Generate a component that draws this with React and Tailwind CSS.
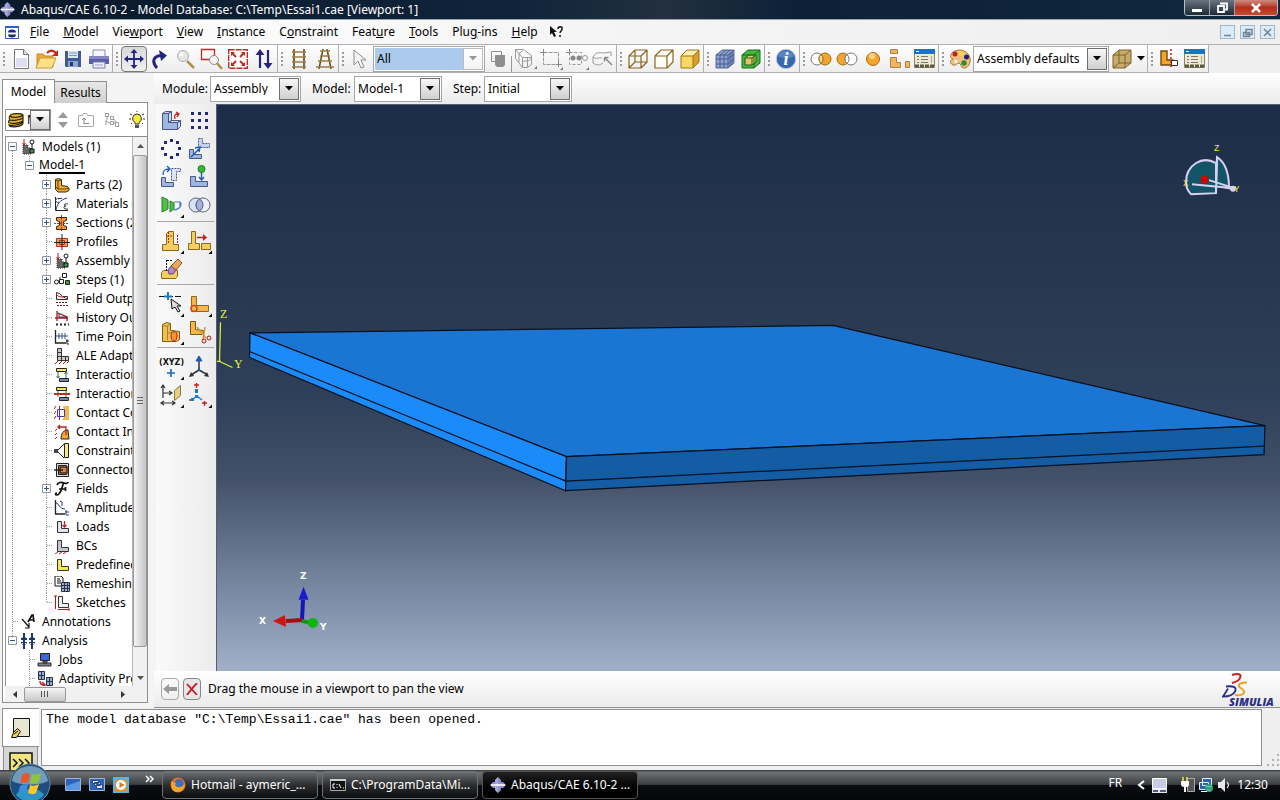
import React from "react";

const NAVY = "#26257c";

function Svg({ w = 20, h = 20, box, children, className = "" }) {
  return (
    <svg width={w} height={h} viewBox={box || `0 0 ${w} ${h}`} fill="none" className={"shrink-0 " + className} aria-hidden="true">
      {children}
    </svg>
  );
}

/* ---------- shared shapes ---------- */

function Logo({ s = 16 }) {
  return (
    <Svg w={s} h={s} box="0 0 16 16">
      <path d="M8 0l3 3v2h2l3 3-3 3h-2v2l-3 3-3-3v-2H3L0 8l3-3h2V3z" fill="#8f90cf" />
      <path d="M5 3l3-3v16l-3-3z" fill="#b9badf" opacity=".6" />
      <path d="M1 8h14" stroke="#fff" strokeWidth="1.6" />
    </Svg>
  );
}

function Grip() {
  return (
    <Svg w={8} h={20}>
      <path d="M4 3v14" stroke="#9a9a9a" strokeWidth="2" strokeDasharray="2 2" />
    </Svg>
  );
}

function Arrow({ color = "#000" }) {
  return (
    <Svg w={8} h={5}>
      <path d="M0 0h8L4 4.5z" fill={color} />
    </Svg>
  );
}

function Corner() {
  return <path d="M27 23.500v3.500h-3.500z" fill="#000" />;
}

/* ---------- toolbar icons ---------- */

const TB = {
  New: (
    <Svg>
      <path d="M3.500 .5h9l5 5v14h-14z" fill="#fff" stroke="#777" />
      <path d="M5 9h11v9H5z" fill="#dedff0" />
      <path d="M12.500 .5v5h5" fill="#ddd" stroke="#777" />
    </Svg>
  ),
  Open: (
    <Svg w={24}>
      <path d="M2 5h6l2 2h8v11H2z" fill="#eaa93a" stroke="#c78a1d" />
      <path d="M5 9h16l-4 10H1z" fill="#fde186" stroke="#cf9a2c" />
      <path d="M12 4c3-3 6-3 9 0" stroke="#c8221a" strokeWidth="2.200" />
      <path d="M23 1v6h-6z" fill="#c8221a" />
    </Svg>
  ),
  Save: (
    <Svg>
      <path d="M2 2h16v16H3l-1-1z" fill="#3c5a96" />
      <path d="M5 2h10v7H5z" fill="#dfe6f2" />
      <path d="M6 4h8M6 6.500h8" stroke="#7f93bb" />
      <path d="M5 12h10v6H5z" fill="#8fa4ca" />
      <path d="M7 13h3v4H7z" fill="#24396b" />
    </Svg>
  ),
  Print: (
    <Svg w={22}>
      <path d="M5 1h12v7H5z" fill="#f6f6fb" stroke="#8b8bb0" />
      <path d="M1 7h20v8H1z" fill="#5a5ca9" />
      <path d="M1 7h20v3H1z" fill="#8485c5" />
      <path d="M5 13h12v6H5z" fill="#eef0fb" stroke="#777aa8" />
      <path d="M7 16h8" stroke="#9a9cc4" />
    </Svg>
  ),
  Pan: (
    <Svg w={20} h={20}>
      <path d="M10 3v14M3 10h14" stroke={NAVY} strokeWidth="1.800" />
      <path d="M10 0l3.500 4h-7zM10 20l3.500-4h-7zM0 10l4-3.500v7zM20 10l-4-3.500v7z" fill={NAVY} />
    </Svg>
  ),
  Rotate: (
    <Svg w={18} h={20}>
      <path d="M6 19C0 12 3 7 10 6.500" stroke={NAVY} strokeWidth="3" />
      <path d="M8 1l8 5.500L10 12z" fill={NAVY} />
    </Svg>
  ),
  Zoom: (
    <Svg>
      <path d="M11 12l7 7" stroke="#b0914a" strokeWidth="2.500" />
      <circle cx="7" cy="7" r="5.500" fill="#e4e6e4" stroke="#aeb0ae" />
      <circle cx="5.500" cy="5.500" r="2" fill="#fff" />
    </Svg>
  ),
  ZoomBox: (
    <Svg w={24} h={22}>
      <path d="M1.500 1.500h13v10h-13z" stroke="#c02a22" strokeWidth="1.300" />
      <path d="M16 14l6 7" stroke="#b0914a" strokeWidth="2.500" />
      <circle cx="14" cy="12" r="4.500" fill="#f4f5f4" stroke="#8a8c8a" />
    </Svg>
  ),
  Fit: (
    <Svg>
      <path d="M.7 .7h18.600v18.600H.7z" fill="#fff" stroke="#c02a22" strokeWidth="1.400" strokeDasharray="6 1" />
      <path d="M4 4l4 4M16 4l-4 4M4 16l4-4M16 16l-4-4" stroke="#c02a22" strokeWidth="2" />
      <path d="M3 3h4L3 7zM17 3h-4l4 4zM3 17h4l-4-4zM17 17h-4l4-4z" fill="#c02a22" />
    </Svg>
  ),
  Cycle: (
    <Svg w={18} h={20}>
      <path d="M5 19V5M13 1v14" stroke={NAVY} strokeWidth="2.200" />
      <path d="M5 0l4.500 6h-9zM13 20l4.500-6h-9z" fill={NAVY} />
    </Svg>
  ),
  Rails: (
    <Svg w={16}>
      <path d="M3 0v20M13 0v20" stroke="#5f4514" strokeWidth="1.600" />
      <path d="M1 3h14M1 8h14M1 13h14M1 18h14" stroke="#9c7d42" strokeWidth="1.600" />
    </Svg>
  ),
  Perspective: (
    <Svg w={18}>
      <path d="M7 0L3 20M11 0l4 20" stroke="#5f4514" strokeWidth="1.500" />
      <path d="M4 2h10M4 7h10M2 12h14M0 18h18" stroke="#9c7d42" strokeWidth="1.600" />
    </Svg>
  ),
  Select: (
    <Svg w={14}>
      <path d="M1 1v15l4-4 3 7 3-1-3-7h5z" stroke="#8e8e8e" fill="#f4f4f4" />
    </Svg>
  ),
  Overlap: (
    <Svg w={16} h={18}>
      <path d="M1.500 1.500h10v10h-10z" stroke="#8e8e8e" />
      <path d="M5 5h10v10l-2 2H7l-2-2z" fill="#8e8e8e" />
    </Svg>
  ),
  GCube: (
    <Svg w={24} h={22}>
      <path d="M2.500 1.500h8l8 6v9l-4 3h-5l-7-9zM2.500 1.500l7 8h9M9.500 9.500v10M6 5.500l4-3M6 5.500v9M9.500 13h6l3-3M14.500 9.500v10" stroke="#999" />
      <path d="M24 18v3h-3z" fill="#777" />
    </Svg>
  ),
  GRect: (
    <Svg w={24} h={22}>
      <path d="M4.500 4.500h15v12h-15z" stroke="#999" strokeDasharray="4 1" />
      <path d="M1 4.500h6M4.500 1v6M17 16.500h6M19.500 13v6" stroke="#888" />
      <path d="M24 19v3h-3z" fill="#777" />
    </Svg>
  ),
  GLink: (
    <Svg w={24} h={22}>
      <path d="M4.500 4.500h12v12h-12z" stroke="#999" strokeDasharray="3 2" />
      <path d="M1 4.500h6M4.500 1v6" stroke="#888" />
      <circle cx="8" cy="10" r="2.500" fill="#888" />
      <circle cx="14" cy="10" r="2.500" fill="#888" />
      <circle cx="20" cy="10" r="2.500" stroke="#999" />
      <path d="M24 19v3h-3z" fill="#777" />
    </Svg>
  ),
  GShape: (
    <Svg w={24} h={20}>
      <path d="M2 8c3-6 8-4 11-4l7-1v4M2 8c3 3 6 0 9 1M2 8v6c4 3 7 2 10 0" stroke="#999" />
      <path d="M14 9l7 7M13.500 8.500v4M13.500 8.500h4" stroke="#888" strokeWidth="1.500" />
    </Svg>
  ),
  Wire: (
    <Svg>
      <path d="M1 7h12v12H1zM7 1h12v12H7zM1 7l6-6M13 7l6-6M1 19l6-6M13 19l6-6" stroke="#8a6420" strokeWidth="1.200" />
    </Svg>
  ),
  Hidden: (
    <Svg>
      <path d="M1 7h12v12H1zM1 7l6-6h12v12l-6 6M13 7l6-6" stroke="#8a6420" strokeWidth="1.200" fill="#fffdf4" />
    </Svg>
  ),
  Shaded: (
    <Svg>
      <path d="M1 7h12v12H1z" fill="#f8d860" />
      <path d="M1 7l6-6h12l-6 6z" fill="#fdeeb0" />
      <path d="M13 7l6-6v12l-6 6z" fill="#d99f28" />
      <path d="M1 7h12v12H1zM1 7l6-6h12v12l-6 6M13 7l6-6" stroke="#a17316" />
    </Svg>
  ),
  Mesh: (
    <Svg>
      <path d="M1 6l6-5h12v13l-6 5H1z" fill="#8fa3cf" />
      <path d="M1 6h12v13H1zM1 6l6-5h12v13l-6 5M13 6l6-5M5 6v13M9 6v13M1 10h12l6-5M1 15h12l6-5M5 6l6-5M9 6l6-5M15 4v13M17 3v13" stroke="#3b4c86" strokeWidth=".8" />
    </Svg>
  ),
  GreenCube: (
    <Svg>
      <path d="M1 6l6-5h12v13l-6 5H1z" fill="#43b83c" />
      <path d="M4 9l4-3h7v7l-4 3H4z" fill="#e6c568" stroke="#1e5a1b" />
      <path d="M1 6h12v13H1zM1 6l6-5h12v13l-6 5M13 6l6-5M4 9h7v7M11 9l4-3" stroke="#1e6a1b" />
    </Svg>
  ),
  Info: (
    <Svg w={22} h={22}>
      <circle cx="11" cy="11" r="9.700" fill="#3767ad" stroke="#b7cbe6" />
      <path d="M3 8c3-7 13-7 16 0-4 3-11 3-16 0z" fill="#7fa3d6" opacity=".5" />
      <text x="11" y="17" textAnchor="middle" fontFamily="Liberation Serif, serif" fontStyle="italic" fontWeight="700" fontSize="18" fill="#fff">i</text>
    </Svg>
  ),
  BoolR: (
    <Svg w={22}>
      <circle cx="7" cy="10" r="6" fill="#fff" stroke="#777" />
      <circle cx="15" cy="10" r="6" fill="#f4a52c" stroke="#a56a10" />
      <path d="M11 5.500a6 6 0 010 9 6 6 0 010-9z" fill="#fbdc9c" stroke="#8a6420" />
    </Svg>
  ),
  BoolL: (
    <Svg w={22}>
      <circle cx="7" cy="10" r="6" fill="#f4a52c" stroke="#a56a10" />
      <circle cx="15" cy="10" r="6" fill="#fff" stroke="#777" />
      <path d="M11 5.500a6 6 0 000 9 6 6 0 000-9z" fill="#fff" stroke="#777" />
    </Svg>
  ),
  Ball: (
    <Svg w={16}>
      <circle cx="8" cy="10" r="6.500" fill="#f4a52c" stroke="#a56a10" />
      <circle cx="7" cy="7" r="3" fill="#fcd488" />
    </Svg>
  ),
  Blocks: (
    <Svg w={22}>
      <path d="M2.500 .5h7v4h-7zM2.500 8.500h6v5h4v5h-10zM17.500 12.500h4v6h-4z" fill="#efb45c" stroke="#a8824a" />
    </Svg>
  ),
  Manager: (
    <Svg w={22}>
      <path d="M.5 .5h20v18H.5z" fill="#efe8cc" stroke="#8a8468" />
      <path d="M0 0h21v5H0z" fill="#1b73c8" />
      <path d="M2 2.500h3" stroke="#fff" />
      <path d="M3 7.500h2M7 7.500h7M3 10.500h2M7 10.500h7M3 13.500h2M7 13.500h7" stroke="#777" />
      <path d="M17.500 7v7" stroke="#aaa" />
      <path d="M1 17h19" stroke="#5d5840" strokeWidth="3" strokeDasharray="4 1" />
    </Svg>
  ),
  Palette: (
    <Svg w={22}>
      <path d="M6 2c6-3 14 1 15 7 1 5-2 11-7 10-3-1-1-4-4-5-2 0-3 3-6 2-4-2-3-5 0-6C0 9 1 4 6 2z" fill="#f0bf7e" stroke="#a8763a" />
      <circle cx="6" cy="5" r="2.500" fill="#c62020" />
      <circle cx="12" cy="4.500" r="2.300" fill="#f1e23a" />
      <circle cx="17.500" cy="8" r="2.500" fill="#1f1e78" />
      <circle cx="15" cy="14" r="2.700" fill="#2f8a35" />
      <circle cx="7" cy="12.500" r="1.700" fill="#fff" />
    </Svg>
  ),
  TanCube: (
    <Svg>
      <path d="M1 6l6-5h12v13l-6 5H1z" fill="#c8ab6c" />
      <path d="M1 6h12v13H1zM1 6l6-5h12v13l-6 5M13 6l6-5M7 1v13h12M7 14l-6 5" stroke="#7c6228" />
    </Svg>
  ),
  Cut: (
    <Svg>
      <path d="M2 2h6v9h6v5H2z" fill="#f4a52c" stroke="#6d4a14" strokeWidth="1.400" />
      <path d="M12.500 11.500h6v5h-6z" fill="#fff" stroke="#333" />
      <path d="M12 0v20" stroke="#c01818" strokeWidth="1.500" strokeDasharray="2 2" />
    </Svg>
  ),
};

function Tool({ icon, label, active, disabled }) {
  return (
    <button
      type="button"
      aria-label={label}
      disabled={disabled}
      className={
        "flex h-[26px] w-[26px] shrink-0 items-center justify-center " +
        (active ? "rounded border border-[#777] bg-linear-to-b from-[#d9d9d9] to-[#efefef]" : "")
      }
    >
      {TB[icon]}
    </button>
  );
}

function Group({ children }) {
  return (
    <div className="flex h-full shrink-0 items-center border-r border-b border-[#b0b0b0] bg-linear-to-b from-white to-[#ededed]">
      <Grip />
      {children}
    </div>
  );
}

function Combo({ label, value, width, disabled, id }) {
  return (
    <div className={"relative flex h-[26px] shrink-0 border border-[#a5a5a5] bg-white p-px " + width}>
      <select
        id={id}
        aria-label={label}
        disabled={disabled}
        defaultValue={value}
        className={"h-full w-full appearance-none pl-[2px] pr-6 text-[12px] leading-none text-black outline-none opacity-100 " + (disabled ? "bg-[#accbec]" : "bg-white")}
      >
        <option>{value}</option>
      </select>
      <span
        className={
          "pointer-events-none absolute top-px right-px bottom-px flex w-[20px] items-center justify-center border bg-linear-to-b " +
          (disabled ? "border-[#bbb] from-white to-[#f3f3f3]" : "border-[#6e6e6e] from-[#f7f7f7] to-[#cfcfcf]")
        }
      >
        <Arrow color={disabled ? "#999" : "#000"} />
      </span>
    </div>
  );
}

/* ---------- model tree ---------- */

const L = (fill, extra, stroke = "#333") => (
  <>
    <path d="M3.500 2.500h4v7h7v4h-11z" fill={fill} stroke={stroke} />
    {extra}
  </>
);

const TREE_ICONS = {
  models: (
    <>
      <path d="M3 6v9h8V9H8V6z" fill="#666" stroke="#333" strokeDasharray="1 1" />
      <path d="M4 0v6M2.500 4L4 6l1.500-2" stroke="#b01818" />
      <circle cx="12" cy="3" r="2" stroke="#111" />
      <path d="M12 5v5" stroke="#111" />
      <path d="M10 10h4v4h-4z" fill="#3d9a45" stroke="#111" />
    </>
  ),
  parts: (
    <>
      <path d="M1.500 2.500l3-1 3 1v6l6 1 1.500 2v2l-3 1.500H4l-2.500-2.500z" fill="#f0ac33" stroke="#3b2808" />
      <path d="M2 3l2 1v8l-2-2M4 4l3-1M4 12h8l3-1" stroke="#3b2808" strokeWidth=".8" />
    </>
  ),
  materials: (
    <>
      <path d="M1.500 1v13.500H14" stroke="#222" />
      <path d="M2 14C3 8 6 4 13 2M4 2.500h4M5 3a2 2 0 100 3" stroke="#2b3f78" />
      <path d="M14 8c-4-1-5 2-2 2-3 0-3 4 2 3" stroke="#222" />
    </>
  ),
  sections: (
    <>
      <path d="M2.500 2.500h10v3l-3 1v4l3 1v3h-10v-3l3-1v-4l-3-1z" fill="#f0953a" stroke="#3b2808" />
      <path d="M7.500 0v16M0 8.500h15" stroke="#b83020" strokeDasharray="2 1" />
    </>
  ),
  profiles: (
    <>
      <path d="M2.500 4.500h11v8h-11zM5.500 6.500h5v4h-5z" stroke="#b83020" fill="#f0a070" />
      <path d="M8 0v16M0 8.500h16" stroke="#222" />
    </>
  ),
  steps: (
    <>
      <path d="M4 9h6M6 9V5" stroke="#222" />
      <circle cx="2.500" cy="10" r="2" fill="#fff" stroke="#222" />
      <path d="M5.500 7.500h4v4h-4zM8.500 1.500h4v4h-4z" fill="#fff" stroke="#222" />
      <path d="M11.500 8.500h4v4h-4z" fill="#3d9a45" stroke="#222" />
    </>
  ),
  field: (
    <>
      <path d="M2.500 1.500v7h11v-3h-5l-3-3z" fill="#eee" stroke="#333" />
      <path d="M2 3c4 5 6 1 11 5" stroke="#c02020" />
      <path d="M2 11.500h12M3 14.500h12" stroke="#701818" strokeDasharray="2 1" />
    </>
  ),
  history: (
    <>
      <path d="M3 1v10M1 8h13M4 3l9 4v4" stroke="#a01828" strokeWidth="1.300" />
      <path d="M5 3v4h7" stroke="#333" />
      <path d="M2 14.500h13" stroke="#222" strokeWidth="2" strokeDasharray="2 2" />
    </>
  ),
  time: (
    <>
      <path d="M1.500 1v13H12" stroke="#222" strokeWidth="1.300" />
      <path d="M2 7h12M5 4v6M8 4v6M11 4v6" stroke="#35528c" />
      <path d="M13 10v5h2M12 12h3" stroke="#222" />
    </>
  ),
  ale: (
    <>
      <path d="M3.500 .5h4v8h7v4h-11zM3.500 4.500h4M3.500 8.500h4v4M11.500 8.500v4" fill="#c8c8c8" stroke="#333" />
      <path d="M1 16l3-3M5 16l3-3M9 16l3-3M13 15l2-2" stroke="#b01818" />
    </>
  ),
  interaction: (
    <>
      <path d="M2.500 1.500h10v3h-10z" fill="#f3e85a" stroke="#222" />
      <path d="M5.500 11.500h9v3h-9z" fill="#7384b5" stroke="#222" />
      <path d="M4 5v6M12 5v6M2.500 9L4 11l1.500-2M10.500 7L12 5l1.500 2" stroke="#23803a" />
    </>
  ),
  interaction2: (
    <>
      <path d="M2.500 1.500h10v3h-10z" fill="#f3e85a" stroke="#222" />
      <path d="M5.500 11.500h9v3h-9z" fill="#7384b5" stroke="#222" />
      <path d="M4 5v6M12 5v6" stroke="#23803a" />
      <path d="M0 8h16" stroke="#b83020" strokeWidth="2" />
    </>
  ),
  contact: (
    <>
      <path d="M8 1h7v14H8c4-4 4-10 0-14z" fill="#f1b84b" />
      <path d="M3.500 4.500h7v7h-7zM5.500 1v14" stroke="#4a35a8" />
      <path d="M0 4l2-3M0 9l2-3M0 14l2-3" stroke="#b01818" />
    </>
  ),
  contactInit: (
    <>
      <path d="M14 6c-5 0-7 4-7 9h8z" fill="#f1a83b" stroke="#222" />
      <path d="M4 3h8v8M6 1L4 3l2 2" stroke="#c02020" strokeWidth="1.300" />
      <path d="M1 7l2-2M1 11l2-2M1 15l2-2" stroke="#b01818" />
    </>
  ),
  constraint: (
    <>
      <path d="M10.500 .5h4v14h-4z" fill="#f6ec7a" stroke="#222" />
      <path d="M10 1L3 8l7 7" stroke="#222" />
      <path d="M0 6h4v4H0z" fill="#444" />
    </>
  ),
  connector: (
    <>
      <path d="M2.500 1.500h12v13h-12zM4.500 3.500h8v9h-8z" stroke="#222" fill="#ddd" />
      <path d="M6 5h7v6H6z" fill="#c98a58" stroke="#50200a" strokeWidth="1.500" />
      <path d="M0 8h9" stroke="#222" strokeWidth="1.500" />
    </>
  ),
  fields: (
    <path d="M3 4c1-3 5-3 7-2s4 0 4-1M9.500 2C8 6 7 14 3 14c-2 0-2-2 0-2M5 8h7M11.500 6v4" stroke="#111" strokeWidth="1.700" />
  ),
  amplitude: (
    <>
      <path d="M1.500 0v14H11" stroke="#222" strokeWidth="1.300" />
      <path d="M2 3c3 0 3 6 9 6M6 1l2 1v4M12 10v5h3M11 12h4" stroke="#2b3f78" />
    </>
  ),
  loads: L("#dfe3ec", <path d="M10.500 2v6M8.500 6l2 2 2-2" stroke="#c02020" strokeWidth="1.300" />),
  bcs: L("#c2c6d4", <path d="M1 16l3-2M5 16l3-2M9 16l3-2" stroke="#c02020" />),
  predefined: L("#f3e85a", null),
  remeshing: (
    <>
      <path d="M1 0h6l2 2v8H1z" fill="#fff" stroke="#111" />
      <path d="M3 3h3M3 5h4M3 7h4" stroke="#111" />
      <path d="M7.500 6.500h8v9h-8zM7.500 9.500h8M7.500 12.500h8M10.500 6.500v9M13.500 6.500v9" fill="#9bb0cc" stroke="#26324a" />
    </>
  ),
  sketches: (
    <>
      <path d="M4.500 1.500h4v7h6v4h-10z" fill="#eee" stroke="#333" />
      <path d="M1.500 1v13M4 14.500h11M0 1h3M15 13v3" stroke="#b01818" />
    </>
  ),
  annotations: (
    <>
      <path d="M2 5l7 8M9 9v5H5" stroke="#111" strokeWidth="1.200" />
      <path d="M8 8l4-7h1l1 7M9 6h5" stroke="#111" strokeWidth="1.700" />
    </>
  ),
  analysis: (
    <>
      <path d="M4 0v16M12 0v16" stroke="#1c3a63" strokeWidth="2" />
      <path d="M1 6l3-3 3 3zM1 10l3 3 3-3zM9 6l3-3 3 3zM9 10l3 3 3-3zM1 5h6v2H1zM9 5h6v2H9zM1 9h6v2H1zM9 9h6v2H9z" fill="#1c3a63" />
    </>
  ),
  jobs: (
    <>
      <path d="M3.500 1.500h9v7h-9z" fill="#3a66e0" stroke="#222" />
      <path d="M6 9h4v2H6zM1 11h13v3H1z" fill="#7d8088" stroke="#333" />
    </>
  ),
  adaptivity: (
    <>
      <path d="M1.500 .5h6v8h-6zM1.500 4.500h6M4.500 .5v8M9.500 6.500h6v8h-6zM9.500 10.500h6M12.500 6.500v8" fill="#9bb0cc" stroke="#26324a" />
      <path d="M3 10c0 3 1 4 4 4M5 11l3 3-3 2" stroke="#c02020" strokeWidth="1.500" />
    </>
  ),
};

/* guide cells from the left: "|" line, "-" line with branch, "L" last branch, "+" closed expander, "M" last open expander, "T" first open expander, " " blank */
const ROWS = [
  ["T", "models", "Models (1)"],
  ["|M", null, "Model-1"],
  ["| +", "parts", "Parts (2)"],
  ["| +", "materials", "Materials (1)"],
  ["| +", "sections", "Sections (2)"],
  ["| -", "profiles", "Profiles"],
  ["| +", "models", "Assembly"],
  ["| +", "steps", "Steps (1)"],
  ["| -", "field", "Field Output Requests"],
  ["| -", "history", "History Output Requests"],
  ["| -", "time", "Time Points"],
  ["| -", "ale", "ALE Adaptive Mesh"],
  ["| -", "interaction", "Interactions"],
  ["| -", "interaction2", "Interaction Properties"],
  ["| -", "contact", "Contact Controls"],
  ["| -", "contactInit", "Contact Initializations"],
  ["| -", "constraint", "Constraints"],
  ["| -", "connector", "Connector Sections"],
  ["| +", "fields", "Fields"],
  ["| -", "amplitude", "Amplitudes"],
  ["| -", "loads", "Loads"],
  ["| -", "bcs", "BCs"],
  ["| -", "predefined", "Predefined Fields"],
  ["| -", "remeshing", "Remeshing Rules"],
  ["| L", "sketches", "Sketches"],
  ["-", "annotations", "Annotations"],
  ["M", "analysis", "Analysis"],
  [" -", "jobs", "Jobs"],
  [" -", "adaptivity", "Adaptivity Processes"],
];

function Guide({ kind, last }) {
  const box = "+TM".includes(kind);
  const up = "|-L+M".includes(kind);
  const down = "|-+T".includes(kind);
  return (
    <Svg w={last ? 14 : 17} h={19}>
      {up && <path d="M6.500 0v9" stroke="#999" strokeDasharray="1 1" />}
      {down && <path d="M6.500 10v9" stroke="#999" strokeDasharray="1 1" />}
      {"-L".includes(kind) && <path d="M7 9.500h6" stroke="#999" strokeDasharray="1 1" />}
      {box && (
        <>
          <path d="M2.500 5.500h8v8h-8z" fill="#fff" stroke="#8f96a3" />
          <path d={kind === "+" ? "M4 9.500h5M6.500 7v5" : "M4 9.500h5"} stroke="#34508f" />
        </>
      )}
    </Svg>
  );
}

function Tree() {
  return (
    <ul className="min-w-0 flex-1 overflow-hidden" role="tree">
      {ROWS.map(([g, icon, text]) => (
        <li key={text} role="treeitem" className="flex h-[19px] items-center whitespace-nowrap">
          {g.split("").map((k, i) => (
            <Guide key={i} kind={k} last={i === g.length - 1} />
          ))}
          {icon && (
            <Svg w={16} h={16} className="mr-[6px]">
              {TREE_ICONS[icon]}
            </Svg>
          )}
          {icon ? <span>{text}</span> : <span className="ml-[2px] border-b-2 border-black leading-[15px]">{text}</span>}
        </li>
      ))}
    </ul>
  );
}

function ModelPanel() {
  return (
    <aside className="flex min-h-0 w-[148px] shrink-0 flex-col bg-[#f4f4f4] pt-[6px] pb-[5px] pl-[2px]">
      <div className="flex h-6 shrink-0 items-end" role="tablist">
        <button type="button" role="tab" aria-selected="true" className="h-6 w-[53px] border border-b-0 border-[#8f8f8f] bg-white">
          Model
        </button>
        <button type="button" role="tab" aria-selected="false" className="h-[22px] w-[52px] border border-b-0 border-l-0 border-[#8f8f8f] bg-linear-to-b from-[#e8e8e8] to-[#cfcfcf]">
          Results
        </button>
        <span className="flex-1 border-b border-[#8f8f8f]" />
      </div>
      <div className="flex min-h-0 flex-1 flex-col border border-t-0 border-[#8f8f8f] bg-white pl-[2px]">
        <div className="flex h-[33px] shrink-0 items-center">
          <button type="button" aria-label="Database" className="flex h-[22px] w-[46px] items-center border border-[#8f8f8f]">
            <Svg w={18} h={16} className="ml-px">
              <path d="M3 4c0-3 13-3 13-1v8c0 4-13 5-14 2 0-1 1-1 1-2-2 0-2-2 0-3-1-1-1-3 0-4z" fill="#e3ba2c" />
              <path d="M3 4c2 2 10 2 13-1M3 4c0-3 13-3 13-1v8c0 4-13 5-14 2 3 1 11 0 14-3M3 4c-1 1-1 3 0 4 3 1 10 0 13-2M3 8c-2 1-2 3 0 3 3 1 10 0 13-2" stroke="#2b2204" strokeWidth="1.200" />
            </Svg>
            <span className="w-[5px] overflow-hidden pl-[2px] text-left">M</span>
            <span className="ml-auto flex h-full w-5 items-center justify-center border border-[#6e6e6e] bg-linear-to-b from-white to-[#cfcfcf]">
              <Arrow />
            </span>
          </button>
          <button type="button" aria-label="Reorder" className="flex w-6 justify-center">
            <Svg w={10} h={16}>
              <path d="M5 0l5 6H0zM5 16l5-6H0z" fill="#999" />
            </Svg>
          </button>
          <button type="button" aria-label="Up one level" className="flex w-[22px] justify-center">
            <Svg w={16} h={14}>
              <path d="M.5 2.500h4l1-2h3l1 2h6v11H.5z" stroke="#aaa" />
              <path d="M6 11V5M4 7l2-2 2 2M6 10.500h5" stroke="#888" />
            </Svg>
          </button>
          <button type="button" aria-label="Link" className="flex w-[30px] justify-center">
            <Svg w={16} h={16}>
              <path d="M1.500 1.500h3v3h-3zM6.500 4.500h3v3h-3zM6.500 9.500h3v3h-3zM11.500 10.500h3v4h-3zM2 9l4 2M3 5v3M9 6l3 4M9 11h3M2 8v5" stroke="#999" />
            </Svg>
          </button>
          <button type="button" aria-label="Tips" className="flex w-[20px] justify-center">
            <Svg w={16} h={18}>
              <path d="M1 3l2 1M15 3l-2 1M0 8h2M14 8h2M8 0v1M2 13l1-1M14 13l-1-1" stroke="#333" />
              <path d="M8 3a4.500 4.500 0 00-2 8.500V13h4v-1.500A4.500 4.500 0 008 3z" fill="#f9ea3c" stroke="#333" />
              <path d="M6 14h4v3H6z" fill="#555" />
            </Svg>
          </button>
        </div>
        <div className="flex min-h-0 flex-1 border-t border-l border-[#8f8f8f]">
          <div className="flex min-w-0 flex-1 overflow-hidden">
            <Tree />
          </div>
          <div className="flex w-[15px] shrink-0 flex-col items-center border-l border-[#b5b5b5] bg-[#f1f1f1]">
            <span className="flex h-[18px] items-center">
              <Svg w={7} h={4}>
                <path d="M0 4h7L3.500 0z" fill="#555" />
              </Svg>
            </span>
            <span className="flex w-full flex-1 items-center justify-center rounded-xs border border-[#999] bg-linear-to-r from-[#f5f5f5] to-[#c4c4c9]">
              <Svg w={6} h={8}>
                <path d="M0 .5h6M0 3.500h6M0 6.500h6" stroke="#666" />
              </Svg>
            </span>
            <span className="flex h-[39px] items-end pb-[6px]">
              <Svg w={7} h={4}>
                <path d="M0 0h7L3.500 4z" fill="#555" />
              </Svg>
            </span>
          </div>
        </div>
        <div className="flex h-4 shrink-0 items-center bg-[#f1f1f1]">
          <span className="flex w-[19px] justify-center">
            <Svg w={4} h={7}>
              <path d="M4 0v7L0 3.500z" fill="#333" />
            </Svg>
          </span>
          <span className="flex h-[15px] w-[42px] items-center justify-center rounded-xs border border-[#999] bg-linear-to-b from-[#f5f5f5] to-[#c8c8c8]">
            <Svg w={8} h={6}>
              <path d="M.5 0v6M3.500 0v6M6.500 0v6" stroke="#555" />
            </Svg>
          </span>
          <Svg w={4} h={7} className="ml-[55px]">
            <path d="M0 0v7l4-3.500z" fill="#333" />
          </Svg>
        </div>
      </div>
    </aside>
  );
}

/* ---------- toolbox ---------- */

const BLUE = "#9db7e2";
const GOLD = "#f3cf63";

const KIT = [
  [
    ["Instance part", <><path d="M5.500 6.500h6v9h9v7h-15z" fill={BLUE} stroke="#48587e" /><path d="M5.500 6.500l3-2h6l-3 2zM11.500 15.500l3-2h9l-3 2zM11.500 6.500l3-2v9l-3 2zM20.500 15.500l3-2v6l-3 3z" stroke="#48587e" fill="#d0dcf2" /><path d="M18 12c-1-4 0-5 3-5M19 5l3 2-2 3" stroke="#c02020" strokeWidth="1.300" /></>],
    ["Linear pattern", <path d="M6 5h3v3H6zM13 5h3v3h-3zM20 5h3v3h-3zM6 12h3v3H6zM13 12h3v3h-3zM20 12h3v3h-3zM6 19h3v3H6zM13 19h3v3h-3zM20 19h3v3h-3z" fill={NAVY} />],
    ["Radial pattern", <path d="M13 4h3v3h-3zM13 21h3v3h-3zM4 12h3v3H4zM21 12h3v3h-3zM7 6h3v3H7zM19 6h3v3h-3zM7 18h3v3H7zM19 18h3v3h-3z" fill={NAVY} />],
    ["Translate instance", <><path d="M13.500 3.500h4v5h7v4h-11z" fill="#c3d2ee" stroke="#48587e" strokeDasharray="2 1" /><path d="M4.500 14.500h4v5h8v4h-12z" fill={BLUE} stroke="#48587e" /><path d="M6 22l8-8M10 13l5-1-1 5" stroke="#1c5bb8" strokeWidth="1.500" /></>],
    ["Rotate instance", <><path d="M14.500 5.500h9v3h-4v9h-5z" fill="#dbe4f4" stroke="#48587e" strokeDasharray="2 1" /><path d="M4.500 14.500h4v5h8v4h-12z" fill={BLUE} stroke="#48587e" /><path d="M6 12c0-5 2-6 6-6M10 3l3 3-3 3" stroke="#1c5bb8" strokeWidth="1.300" /></>],
    ["Translate to", <><path d="M5.500 13.500h5v5h12v5h-17z" fill={BLUE} stroke="#48587e" /><path d="M16.500 8v9M14 14l2.500 3 2.500-3" stroke="#1c5bb8" strokeWidth="1.400" /><circle cx="16.500" cy="6" r="3.500" fill="#37b43a" stroke="#1b7a1e" /></>],
    ["Replace", <><path d="M5 6l6 3v9l-6 3zM13 10l4 2v6l-4 3z" fill="#4fc04a" stroke="#2a7a28" /><path d="M17 19c7-1 8-6 6-8M17 11h6v5" stroke="#4a78c8" strokeWidth="1.200" /><Corner /></>],
    ["Merge / cut", <><circle cx="11" cy="14" r="7" fill="#dbe2f3" stroke="#5a6280" /><circle cx="18" cy="14" r="7" fill="#eef1f9" stroke="#5a6280" fillOpacity=".5" /><path d="M14.500 8a7 7 0 010 12 7 7 0 010-12z" fill="#a3b3db" stroke="#5a6280" /></>],
  ],
  [
    ["Partition edge", <><path d="M9.500 6.500l2-2h5v13h5v6h-16v-6h4z" fill={GOLD} stroke="#8a6a1a" /><path d="M10 9h7M11.500 5v12M20.500 8v10" stroke="#c02020" strokeDasharray="2 1" /><Corner /></>],
    ["Partition face", <><path d="M6.500 4.500h4v12h4v6h-11v-6h3zM16.500 16.500h9v6h-9z" fill={GOLD} stroke="#8a6a1a" /><path d="M12 10.500h8" stroke="#c02020" strokeWidth="1.500" /><path d="M18 7l4 3.500-4 3.500z" fill="#c02020" /><Corner /></>],
    ["Edit feature", <><path d="M4.500 17.500l2-2h14v6l-2 2h-14z" fill={GOLD} stroke="#8a6a1a" /><path d="M11 15l3-4 5 4-3 4h-4z" fill="#b58ac8" stroke="#67407a" /><path d="M14 11l7-7 4 4-6 7z" fill="#eba65a" stroke="#8a5a1a" /><path d="M9.500 5v11M10 5.500h6" stroke="#111" strokeDasharray="2 1" /></>],
  ],
  [
    ["Datum axis", <><path d="M2 6.500h24" stroke="#111" strokeDasharray="6 2" /><path d="M11 2v8M7 6.500h8" stroke="#1c7bc8" strokeWidth="2" /><path d="M14 9l1 10 3-2 3 5 2-1-3-5h4z" fill="#ddd" stroke="#111" /><Corner /></>],
    ["Datum plane", <><path d="M6.500 6.500h5v9h12v6h-17z" fill="#f6b54a" stroke="#8a6a1a" /><circle cx="9" cy="18.500" r="3" stroke="#d04a18" strokeWidth="1.500" /><Corner /></>],
    ["Partition cell", <><path d="M5.500 6.500l4-2 4 1v7l9 1v8l-3 2h-14z" fill="#f0bf52" stroke="#7a5a14" /><ellipse cx="17" cy="18" rx="3" ry="5" fill="#f0953a" stroke="#c02020" /><path d="M5.500 8h5l3-2M10.500 8v14M11 15l10-1" stroke="#a8802a" /><Corner /></>],
    ["Cut cell", <><path d="M5.500 3.500h5v8l8 1v4h-13z" fill="#f3b84a" stroke="#7a5a14" /><path d="M12 9l9 11M20 9l-2 13" stroke="#c89a3a" strokeWidth="1.500" /><circle cx="19" cy="23" r="2" stroke="#b01818" /><circle cx="24" cy="20" r="2" stroke="#b01818" /></>],
  ],
  [
    ["Datum point", <><text x="2" y="12" fontSize="8" fontWeight="700" fontFamily="DejaVu Sans, sans-serif" fill="#111">(XYZ)</text><path d="M14 16v8M10 20h8" stroke="#1c6bc8" strokeWidth="1.700" /><Corner /></>],
    ["Datum csys", <><path d="M14 17V5M14 17l-8 5M14 17l9 5" stroke="#333" strokeWidth="1.500" /><path d="M11 8l3-5 3 5zM14 14v4" fill="#1c5bb8" stroke="#1c5bb8" /><path d="M4 24l5-1-3-4zM24 24l-5-1 3-4z" fill="#333" /></>],
    ["Datum offset", <><path d="M6 5v12M4 7l2-3 2 3M6 12h8M12 10l3 2-3 2M5 22h12M7 20l-3 2 3 2M15 20l3 2-3 2" stroke="#333" strokeWidth="1.200" /><path d="M17.500 9.500l6-5v10l-6 5z" fill="#e8d08a" stroke="#8a7a3a" /><Corner /></>],
    ["Reference point", <><path d="M9 4h5M11.500 2v5M4 19h5M17 22h5M19.500 20v5" stroke="#c02020" strokeWidth="1.300" /><path d="M10 8h3v4h-3zM10 14h3v3h-3zM6 17h3v3H6z" fill="#1c7bc8" /><path d="M12 15l-5 4M12 15l5 4" stroke="#1c7bc8" strokeWidth="1.500" /><Corner /></>],
  ],
];

function Toolbox() {
  return (
    <div className="flex w-[60px] shrink-0 flex-col divide-y divide-[#a8a8a8] bg-linear-to-r from-[#fafafa] to-[#ececec] pt-[3px] pr-[2px] pl-px">
      {KIT.map((set, i) => (
        <div key={i} className="grid grid-cols-[28px_28px] pt-[5px] pb-px first:pt-0 first:pb-[2px]">
          {set.map(([label, art]) => (
            <button key={label} type="button" aria-label={label} className="h-7 w-7">
              <Svg w={28} h={28}>{art}</Svg>
            </button>
          ))}
        </div>
      ))}
    </div>
  );
}

/* ---------- viewport ---------- */

function Viewport() {
  return (
    <div className="min-h-0 flex-1 border-t border-l border-[#555e70] bg-[linear-gradient(to_bottom,#1c2d49_0%,#28384f_33%,#2f405a_52%,#435168_66%,#5c6982_75%,#808fa9_88%,#a2b0c7_100%)]">
      <svg className="block h-full w-full" viewBox="217 105 1063 565" preserveAspectRatio="none" fill="none" role="img" aria-label="Plate assembly">
        <g stroke="#04101f" strokeWidth="1.200" strokeLinejoin="round">
          <path d="M250 332.500L833 325l432 100-699 31z" fill="#1a76d2" />
          <path d="M250 332.500L566.500 456l-1 34L249.500 357z" fill="#1c8bfa" />
          <path d="M566.500 456L1265 425l-1 29-698.500 36z" fill="#145ca4" />
          <path d="M249.500 351L566 480.500l698-35" />
        </g>
        <g stroke="#dff33b" strokeWidth="1.200">
          <path d="M220.500 322l-1 39 13 6M217 361h4" />
        </g>
        <g fill="#e8f23b" fontFamily="Liberation Serif, serif" fontSize="12">
          <text x="220" y="318">Z</text>
          <text x="234" y="368">Y</text>
        </g>
        <g stroke="#d8d0f4" strokeWidth="2" fill="#125566">
          <path d="M1217 157c8 5 12 16 12 31l-13-3z" />
          <path d="M1216 163c-14-8-30 2-30 19 0 5 2 9 5 12l25-1z" />
          <path d="M1217 157l-1 36M1192 184l42 4-25-8" />
        </g>
        <path d="M1201 176h7v7h-7z" fill="#d00000" />
        <circle cx="1233" cy="188.500" r="3" fill="#d8d0f4" />
        <g fill="#eef03b" fontFamily="Liberation Mono, monospace" fontSize="9">
          <text x="1214" y="151">Z</text>
          <text x="1183" y="186">X</text>
          <text x="1234" y="192">Y</text>
        </g>
        <path d="M302 619l1-20" stroke="#1515b8" strokeWidth="4" />
        <path d="M303.500 586l5 13h-10z" fill="#1a1ad0" />
        <path d="M302 619l-16 1" stroke="#a01010" strokeWidth="4" />
        <path d="M273 620l12-6 1 12z" fill="#d01414" />
        <path d="M302 620l8 2" stroke="#109a10" strokeWidth="4" />
        <circle cx="313" cy="622" r="5" fill="#12b412" />
        <g fill="#fff" fontFamily="DejaVu Sans, sans-serif" fontWeight="700" fontSize="9">
          <text x="300" y="578">Z</text>
          <text x="259" y="623">X</text>
          <text x="320" y="629">Y</text>
        </g>
      </svg>
    </div>
  );
}

function SimuliaLogo() {
  return (
    <Svg w={58} h={36}>
      <path d="M10 3c6-2 10-1 8 3-1 3-4 4-8 5" stroke="#c8201c" strokeWidth="2" />
      <path d="M25 10.500c-5 0-9 1-8 4 1 2 6 3 5 6-1 3-5 3-9 2.500" stroke="#e8a21c" strokeWidth="2" />
      <path d="M4 14.500c8-1 11 1 9 5-2 4-7 5-12 5l5-8" stroke="#2b2f86" strokeWidth="1.800" />
      <text x="7" y="34" fontFamily="Open Sans, sans-serif" fontSize="11" fontWeight="800" fontStyle="italic" fill="#2b2f86">SIMULIA</text>
    </Svg>
  );
}

/* ---------- frame ---------- */

const MENU = [["", "F", "ile"], ["", "M", "odel"], ["Vie", "w", "port"], ["", "V", "iew"], ["", "I", "nstance"], ["C", "o", "nstraint"], ["Feat", "u", "re"], ["", "T", "ools"], ["Plu", "g", "-ins"], ["", "H", "elp"]];

const WIN = ["M2 8.500h7", "M4 2.500h6v5H4zM1.500 5.500h6v4h-6z", "M2 2l7 7M9 2l-7 7"];

function TitleBar() {
  return (
    <header className="flex h-5 shrink-0 items-start justify-between border-b border-[#9aa5b0] bg-[linear-gradient(100deg,#0b1a2b_0%,#10233a_40%,#22303f_52%,#0d2036_62%,#10283d_100%)]">
      <div className="flex h-[19px] items-center gap-[6px] text-white">
        <Logo s={15} />
        <h1>Abaqus/CAE 6.10-2 - Model Database: C:\Temp\Essai1.cae [Viewport: 1]</h1>
      </div>
      <div className="mr-[2px] flex h-4 overflow-hidden rounded-b border border-t-0 border-[#b8bfc6]">
        <button type="button" aria-label="Minimize" className="flex w-[25px] items-center justify-center border-r border-[#9aa5b0] bg-linear-to-b from-[#6a7480] to-[#1c2a38]">
          <Svg w={12} h={12}><path d="M1 7h10v3H1z" fill="#fff" /></Svg>
        </button>
        <button type="button" aria-label="Restore" className="flex w-[25px] items-center justify-center border-r border-[#9aa5b0] bg-linear-to-b from-[#6a7480] to-[#1c2a38]">
          <Svg w={12} h={12}><path d="M4 1.500h7v6H9M2 4h6v6H2z" stroke="#fff" strokeWidth="1.800" /></Svg>
        </button>
        <button type="button" aria-label="Close" className="flex w-[42px] items-center justify-center bg-linear-to-b from-[#cf8a80] via-[#b0301c] to-[#c8492c]">
          <Svg w={12} h={12}><path d="M2 2l8 8M10 2l-8 8" stroke="#fff" strokeWidth="2.500" /></Svg>
        </button>
      </div>
    </header>
  );
}

function MenuBar() {
  return (
    <nav className="flex h-6 shrink-0 items-center bg-linear-to-r from-white via-[#f4f4f4] to-[#efefef] px-[5px]">
      <Svg w={14} h={13}>
        <path d="M.5 .5h13v12H.5z" fill="#fff" stroke="#2a5fc0" />
        <path d="M0 0h14v2H0z" fill="#2a62c8" />
        <path d="M3 6.500h8a4 3 0 00-8 0zM3 8.500h8a4 3 0 01-8 0z" fill="#1c2a7a" />
      </Svg>
      <div className="ml-[11px] flex gap-[14px]">
        {MENU.map(([a, b, c]) => (
          <button key={a + b + c} type="button">
            {a}<u>{b}</u>{c}
          </button>
        ))}
      </div>
      <button type="button" aria-label="Context help" className="ml-3">
        <Svg w={14} h={12}>
          <path d="M0 0v9l2-2 2 4 2-1-2-4h3z" fill="#111" />
          <path d="M8 3c0-3 5-3 4 0 0 2-2 2-2 4M10 9v2" stroke="#111" strokeWidth="1.500" />
        </Svg>
      </button>
      <div className="ml-auto flex gap-[5px]">
        {WIN.map((d, i) => (
          <button key={i} type="button" aria-label={["Minimize viewport", "Restore viewport", "Close viewport"][i]} className="flex h-[14px] w-[15px] items-center justify-center border border-[#a3b6c8] bg-[#dcebf8]">
            <Svg w={11} h={11}><path d={d} stroke="#6d8298" strokeWidth="1.500" /></Svg>
          </button>
        ))}
      </div>
    </nav>
  );
}

function ToolBar() {
  return (
    <div className="flex h-[29px] shrink-0 overflow-hidden border-t border-[#b0b0b0] bg-[#efefef]">
      <Group>
        <Tool icon="New" label="New" /><Tool icon="Open" label="Open" /><Tool icon="Save" label="Save" /><Tool icon="Print" label="Print" />
      </Group>
      <Group>
        <Tool icon="Pan" label="Pan" active /><Tool icon="Rotate" label="Rotate" /><Tool icon="Zoom" label="Magnify" /><Tool icon="ZoomBox" label="Box zoom" /><Tool icon="Fit" label="Auto-fit" /><Tool icon="Cycle" label="Cycle views" />
      </Group>
      <Group>
        <Tool icon="Rails" label="Parallel" /><Tool icon="Perspective" label="Perspective" />
      </Group>
      <Group>
        <Tool icon="Select" label="Select" disabled />
        <Combo label="Selection filter" value="All" width="w-[112px]" disabled />
        <Tool icon="Overlap" label="Overlap" disabled />
        <span className="h-4 w-px self-end bg-[#999]" />
        <Tool icon="GCube" label="Select inside" disabled /><Tool icon="GRect" label="Drag shape" disabled /><Tool icon="GLink" label="Select linked" disabled /><Tool icon="GShape" label="Select closest" disabled />
      </Group>
      <Group>
        <Tool icon="Wire" label="Wireframe" /><Tool icon="Hidden" label="Hidden" /><Tool icon="Shaded" label="Shaded" />
      </Group>
      <Group>
        <Tool icon="Mesh" label="Mesh" /><Tool icon="GreenCube" label="Geometry" />
      </Group>
      <Group>
        <Tool icon="Info" label="Query" />
      </Group>
      <Group>
        <Tool icon="BoolR" label="Replace" /><Tool icon="BoolL" label="Remove" /><Tool icon="Ball" label="All" /><Tool icon="Blocks" label="Display group" /><Tool icon="Manager" label="Group manager" />
      </Group>
      <Group>
        <Tool icon="Palette" label="Color code" />
        <Combo label="Color mapping" value="Assembly defaults" width="w-[136px]" />
        <Tool icon="TanCube" label="Translucency" />
        <button type="button" aria-label="Translucency options" className="flex w-3 justify-center"><Arrow /></button>
      </Group>
      <Group>
        <Tool icon="Cut" label="View cut" /><Tool icon="Manager" label="View cut manager" />
      </Group>
    </div>
  );
}

function ContextBar() {
  return (
    <div className="flex h-[31px] shrink-0 items-center gap-[5px] bg-linear-to-b from-white to-[#ebebeb] pl-[8px]">
      <label htmlFor="module" className="w-[43px] whitespace-nowrap">Module:</label>
      <Combo id="module" label="Module" value="Assembly" width="w-[91px]" />
      <label htmlFor="model" className="ml-[6px] w-[37px] whitespace-nowrap">Model:</label>
      <Combo id="model" label="Model" value="Model-1" width="w-[88px]" />
      <label htmlFor="step" className="ml-[6px] w-[26px] whitespace-nowrap">Step:</label>
      <Combo id="step" label="Step" value="Initial" width="w-[88px]" />
    </div>
  );
}

function PromptBar() {
  return (
    <div className="flex h-9 shrink-0 items-center bg-linear-to-b from-white to-[#ebebeb] pl-[7px]">
      <button type="button" aria-label="Previous" className="flex h-[22px] w-[18px] items-center justify-center rounded-sm border border-[#aaa]">
        <Svg w={14} h={12}><path d="M0 6l6-5v3h8v4H6v3z" fill="#999" /></Svg>
      </button>
      <button type="button" aria-label="Cancel" className="ml-1 flex h-[22px] w-[18px] items-center justify-center rounded-sm border border-[#888] bg-[#e6e6e6]">
        <Svg w={12} h={12}><path d="M1 1l10 11M11 0C7 4 4 8 1 12" stroke="#d01428" strokeWidth="1.800" /></Svg>
      </button>
      <p className="ml-[7px]">Drag the mouse in a viewport to pan the view</p>
      <span className="ml-auto self-start pt-px"><SimuliaLogo /></span>
    </div>
  );
}

function MessageArea() {
  return (
    <div className="flex h-[62px] shrink-0 overflow-hidden bg-[#efefef] pl-[2px]">
      <div className="flex w-[38px] shrink-0 flex-col pr-px">
        <button type="button" aria-label="Messages" className="flex h-[39px] shrink-0 items-center justify-center border border-r-0 border-[#8f8f8f] bg-white">
          <Svg w={20} h={22}>
            <path d="M2.500 1.500h16v18h-16z" fill="#e8e6d2" stroke="#111" />
            <path d="M.5 20.500l2-5 4-4 3 3-4 6z" fill="#e8d25a" stroke="#111" />
            <path d="M3 17l4-3" stroke="#111" />
          </Svg>
        </button>
        <button type="button" aria-label="Command line" className="mx-px flex h-6 shrink-0 justify-center border border-t-0 border-[#8f8f8f] bg-[#d6d6d6] pt-[5px]">
          <Svg w={24} h={20}>
            <path d="M1 1h22v19H1z" fill="#f0e87c" stroke="#111" strokeWidth="1.500" />
            <path d="M4 7l4 4-4 4M10 7l4 4-4 4M16 7l4 4-4 4" stroke="#111" strokeWidth="1.500" />
          </Svg>
        </button>
      </div>
      <output className="mt-px mb-1 ml-px flex-1 overflow-hidden border border-[#8f8f8f] bg-white px-[4px] pt-px font-['Liberation_Mono',monospace] text-[13px] leading-[18px]">
        The model database "C:\Temp\Essai1.cae" has been opened.
      </output>
      <div className="flex w-[18px] items-end justify-end pb-1">
        <Svg w={13} h={13}>
          <path d="M10 1h2v2h-2zM5 6h2v2H5zM10 6h2v2h-2zM0 11h2v2H0zM5 11h2v2H5zM10 11h2v2h-2z" fill="#b0b0b0" />
        </Svg>
      </div>
    </div>
  );
}

function Task({ icon, children, active }) {
  return (
    <button
      type="button"
      className={
        "flex h-[28px] w-[156px] items-center gap-[5px] rounded-sm border pl-[7px] text-left whitespace-nowrap " +
        (active ? "border-[#555] bg-linear-to-b from-[#222] to-black" : "border-[#6f7377] bg-linear-to-b from-[#6d7073] via-[#2c2e30] via-50% to-[#0c0d0e]")
      }
    >
      {icon}
      {children}
    </button>
  );
}

function TaskBar() {
  return (
    <footer className="flex h-[30px] shrink-0 items-center bg-[linear-gradient(to_bottom,#34373a_0%,#6e7174_8%,#3c3f42_48%,#0a0c0f_52%,#05070a_100%)] text-white">
      <button type="button" aria-label="Start" className="ml-[8px] flex h-full w-[44px] justify-center">
        <Svg w={42} h={42} className="-mt-[7px]">
          <circle cx="21" cy="21" r="20" fill="#1c4f80" stroke="#6f8798" />
          <path d="M3 18c2-20 34-20 36 0-9 5-27 5-36 0z" fill="#8fb4cc" opacity=".75" />
          <path d="M7 32c8 9 20 9 28 0-4-8-24-8-28 0z" fill="#35b4e0" opacity=".7" />
          <path d="M13 12c3-2 5-2 8-1l-2 9c-3-1-6-1-8 1z" fill="#e8562a" />
          <path d="M23 11c3 1 5 1 9-1l-2 9c-4 2-6 2-9 1z" fill="#8cc63e" />
          <path d="M11 23c3-2 5-2 8-1l-2 8c-3-1-6-1-8 1z" fill="#3c8ede" />
          <path d="M21 22c3 1 5 1 9-1l-3 9c-3 2-5 1-8 0z" fill="#fbc52c" />
        </Svg>
      </button>
      <div className="ml-[13px] flex gap-[8px]">
        <button type="button" aria-label="Show desktop">
          <Svg w={16} h={14}><path d="M.5 .5h15v12H.5z" fill="#2d62b8" stroke="#9fb4d8" /><path d="M1 8l14-5v9H1z" fill="#5a97e0" /></Svg>
        </button>
        <button type="button" aria-label="Switch windows">
          <Svg w={16} h={14}><path d="M.5 .5h15v12H.5z" fill="#2d62b8" stroke="#9fb4d8" /><path d="M3.500 2.500h6v3h-6zM5.500 4.500h6v3h-6zM7.500 6.500h6v4h-6z" fill="#dbe8fa" stroke="#2d4a80" /></Svg>
        </button>
        <button type="button" aria-label="Media player">
          <Svg w={16} h={16}><path d="M1 1h14v14H1z" fill="#f08a1c" stroke="#4ab8e8" strokeWidth="2" /><circle cx="8" cy="8" r="5" fill="#fff" /><path d="M6.500 5v6l5-3z" fill="#e8701c" /></Svg>
        </button>
      </div>
      <Svg w={10} h={8} className="-mt-3 ml-[16px]"><path d="M1 1l3 3-3 3M5 1l3 3-3 3" stroke="#fff" strokeWidth="1.500" /></Svg>
      <div className="ml-[7px] flex gap-[4px]">
        <Task icon={<Svg w={16} h={16}><circle cx="8" cy="8" r="7.500" fill="#e8701c" /><circle cx="9" cy="6.500" r="4.500" fill="#3c6fc0" /><path d="M1 5c2-1 3 1 5 1-2 2 0 5 4 4 2 0 4-2 5-4 0 6-4 9-8 9S1 11 1 5z" fill="#f6a52c" /></Svg>}>
          Hotmail - aymeric_...
        </Task>
        <Task icon={<Svg w={16} h={12}><path d="M.5 .5h15v11H.5z" fill="#111" stroke="#aaa" /><path d="M0 0h16v2H0z" fill="#ccc" /><path d="M5 5H3v4h2M7 5v1M7 8v1M9 5l2 4M13 9h1" stroke="#fff" /></Svg>}>
          C:\ProgramData\Mi...
        </Task>
        <Task active icon={<Logo />}>Abaqus/CAE 6.10-2 ...</Task>
      </div>
      <div className="mr-[12px] ml-auto flex items-center">
        <span className="-mt-1">FR</span>
        <Svg w={8} h={10} className="ml-[15px]"><path d="M7 1L2 5l5 4" stroke="#fff" strokeWidth="2" /></Svg>
        <Svg w={16} h={15} className="ml-[7px]"><path d="M.5 .5h14v10H.5z" fill="#c8cbe4" stroke="#fff" /><path d="M0 11h15v4H0z" fill="#e8e8f4" /><path d="M1 13h5M8 13h6" stroke="#26257c" strokeWidth="1.500" /></Svg>
        <Svg w={15} h={16} className="ml-[13px]"><path d="M6.500 1.500h7v13h-7z" fill="#555" stroke="#aaa" /><path d="M2 0v4M6 0v4" stroke="#f2e84a" strokeWidth="1.500" /><path d="M0 4h8v3c0 3-2 3-3 3v5H3v-5C1 10 0 9 0 7z" fill="#fff" /></Svg>
        <Svg w={16} h={16} className="ml-[2px]"><path d="M4.500 1.500h9v7h-9zM1.500 5.500h9v7h-9z" fill="#2d62b8" stroke="#e6ecf6" /><circle cx="11" cy="11" r="4" fill="#2fa06a" /><path d="M8 10c2-2 4 1 6-1M9 13c2 0 3 0 4 1" stroke="#7fc8f0" /><path d="M3 14.500h6" stroke="#fff" /></Svg>
        <Svg w={13} h={14} className="ml-[4px]"><path d="M0 4h3l4-4v14l-4-4H0z" fill="#e6e6e6" /><path d="M9 4c2 2 2 4 0 6" stroke="#ddd" strokeWidth="1.200" /></Svg>
        <time className="ml-[6px]">12:30</time>
      </div>
    </footer>
  );
}

export default function App() {
  return (
    <div className="flex h-screen min-h-[600px] flex-col overflow-hidden bg-[#f4f4f4] font-['Noto_Sans',sans-serif] text-[12px] leading-[16px] text-black">
      <TitleBar />
      <MenuBar />
      <ToolBar />
      <main className="flex min-h-0 flex-1">
        <ModelPanel />
        <div className="ml-[6px] flex min-w-0 flex-1 flex-col border-b border-[#8f8f8f]">
          <ContextBar />
          <div className="flex min-h-0 flex-1 pl-[2px]">
            <Toolbox />
            <Viewport />
          </div>
          <PromptBar />
        </div>
      </main>
      <MessageArea />
      <TaskBar />
    </div>
  );
}
